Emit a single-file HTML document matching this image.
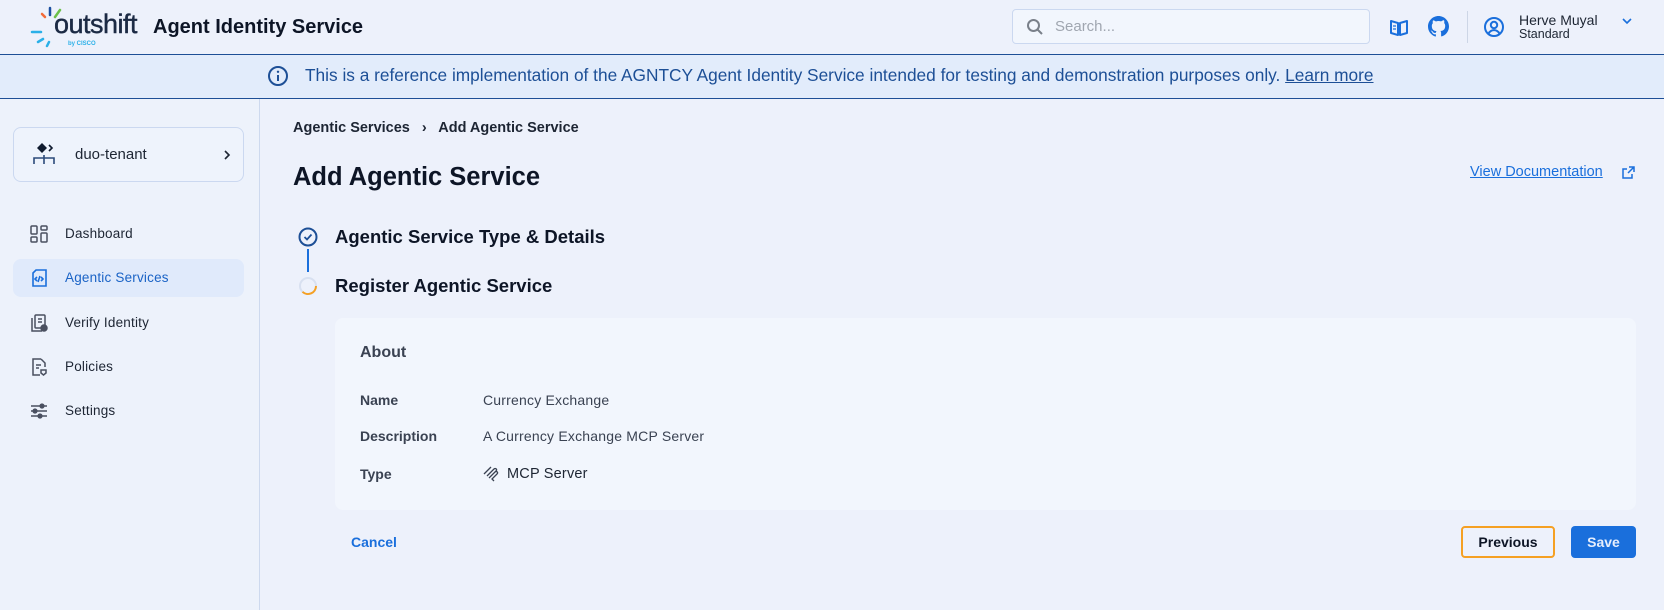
<!DOCTYPE html>
<html><head><meta charset="utf-8">
<style>
*{box-sizing:border-box;margin:0;padding:0}
body{width:1664px;height:610px;overflow:hidden;background:#edf1fb;font-family:"Liberation Sans",sans-serif;color:#0f1a2e;position:relative}
.abs{position:absolute}
.hdr{left:0;top:0;width:1664px;height:55px;background:#edf1fb;border-bottom:1.5px solid #1d4f96}
.ban{left:0;top:55px;width:1664px;height:44px;background:#e2ecfb;border-bottom:1.5px solid #1d4f96}
.side{left:0;top:99px;width:260px;height:511px;background:#edf2fb;border-right:1px solid #cdd9ee}
.nav{position:absolute;left:13px;width:231px;height:38px;border-radius:8px;font-size:13.5px;color:#1d2533;letter-spacing:.2px}
.nav svg{position:absolute;left:17px;top:10px}
.nav span{position:absolute;left:52px;top:11px}
.lbl{position:absolute;left:360px;font-size:14px;font-weight:bold;color:#3a4252}
.val{position:absolute;left:483px;font-size:14px;color:#3a4252;letter-spacing:.2px}
</style></head><body>
<div class="abs hdr">
  <svg class="abs" style="left:28px;top:4px" width="36" height="46" viewBox="0 0 36 46">
    <line x1="22" y1="11" x2="22" y2="4" stroke="#1b4fa0" stroke-width="2.5" stroke-linecap="round"/>
    <line x1="27" y1="13" x2="32" y2="6" stroke="#6cc04a" stroke-width="2.5" stroke-linecap="round"/>
    <line x1="17" y1="13" x2="14" y2="10" stroke="#f26b3a" stroke-width="2.5" stroke-linecap="round"/>
    <line x1="4" y1="28" x2="13" y2="28" stroke="#2ab0e8" stroke-width="2.5" stroke-linecap="round"/>
    <line x1="10" y1="38" x2="15" y2="35" stroke="#2ab0e8" stroke-width="2.5" stroke-linecap="round"/>
    <line x1="19" y1="42" x2="21" y2="38" stroke="#2ab0e8" stroke-width="2.5" stroke-linecap="round"/>
  </svg>
  <div class="abs" style="left:54px;top:9px;font-size:27px;color:#1c2a44;letter-spacing:-.5px;-webkit-text-stroke:.4px #1c2a44">outshift</div>
  <div class="abs" style="left:68px;top:41px;font-size:6px;color:#2ab0e8;font-weight:bold">by CISCO</div>
  <div class="abs" style="left:153px;top:16px;font-size:20px;font-weight:bold;color:#0d1526">Agent Identity Service</div>
  <div class="abs" style="left:1012px;top:9px;width:358px;height:35px;border:1.5px solid #cbd8f0;border-radius:4px;background:#f2f6fd">
    <svg class="abs" style="left:13px;top:8px" width="18" height="18" viewBox="0 0 18 18"><circle cx="7.5" cy="7.5" r="5.5" fill="none" stroke="#7a808a" stroke-width="2"/><line x1="11.5" y1="11.5" x2="16" y2="16" stroke="#7a808a" stroke-width="2"/></svg>
    <div class="abs" style="left:42px;top:8px;font-size:15px;color:#a0a6b0">Search...</div>
  </div>
  <svg class="abs" style="left:1389px;top:17px" width="20" height="20" viewBox="0 0 20 20"><path d="M2 4 L9 6 L9 18 L2 16Z M18 4 L11 6 L11 18 L18 16Z" fill="none" stroke="#1a6fdc" stroke-width="2" stroke-linejoin="round"/><path d="M4 9h3M4 12h3" stroke="#1a6fdc" stroke-width="1.3"/></svg>
  <svg class="abs" style="left:1428px;top:16px" width="21" height="21" viewBox="0 0 16 16"><path fill="#1a6fdc" d="M8 0C3.58 0 0 3.58 0 8c0 3.540 2.29 6.53 5.47 7.59.4.07.55-.17.55-.38v-1.34c-2.23.48-2.7-1.07-2.7-1.07-.36-.93-.89-1.170-.89-1.170-.73-.5.06-.49.06-.49.8.06 1.23.83 1.23.83.72 1.23 1.88.87 2.33.66.07-.52.28-.87.51-1.07-1.78-.2-3.65-.89-3.65-3.95 0-.87.31-1.59.82-2.15-.08-.2-.36-1.02.08-2.12 0 0 .67-.21 2.2.82A7.6 7.6 0 0 1 8 3.8c.68 0 1.36.09 2 .27 1.53-1.04 2.2-.82 2.2-.82.44 1.1.16 1.92.08 2.12.51.56.82 1.27.82 2.15 0 3.07-1.87 3.75-3.65 3.95.29.25.54.73.54 1.48v2.2c0 .21.15.46.55.38A8 8 0 0 0 16 8c0-4.42-3.58-8-8-8z"/></svg>
  <div class="abs" style="left:1467px;top:11px;width:1px;height:32px;background:#cdd6e6"></div>
  <svg class="abs" style="left:1483px;top:16px" width="22" height="22" viewBox="0 0 22 22"><circle cx="11" cy="11" r="9" fill="none" stroke="#1a6fdc" stroke-width="2"/><circle cx="11" cy="9" r="3.2" fill="none" stroke="#1a6fdc" stroke-width="2"/><path d="M5.5 17.5c1.5-2.5 3.5-3.4 5.5-3.4s4 .9 5.5 3.4" fill="none" stroke="#1a6fdc" stroke-width="2"/></svg>
  <div class="abs" style="left:1519px;top:12px;font-size:14px;color:#1d2533">Herve Muyal</div>
  <div class="abs" style="left:1519px;top:27px;font-size:12.5px;color:#1d2533">Standard</div>
  <svg class="abs" style="left:1621px;top:17px" width="12" height="8" viewBox="0 0 12 8"><path d="M2 2l4 4 4-4" fill="none" stroke="#1a6fdc" stroke-width="1.6"/></svg>
</div>
<div class="abs ban">
  <svg class="abs" style="left:267px;top:10px" width="22" height="22" viewBox="0 0 22 22"><circle cx="11" cy="11" r="9" fill="none" stroke="#1d4f96" stroke-width="2"/><line x1="11" y1="10" x2="11" y2="16" stroke="#1d4f96" stroke-width="2"/><circle cx="11" cy="6.8" r="1.2" fill="#1d4f96"/></svg>
  <div class="abs" style="left:305px;top:10px;font-size:17.3px;color:#1d4f96;white-space:nowrap">This is a reference implementation of the AGNTCY Agent Identity Service intended for testing and demonstration purposes only. <u>Learn more</u></div>
</div>
<div class="abs side">
  <div class="abs" style="left:13px;top:28px;width:231px;height:55px;border:1px solid #cbd8f0;border-radius:8px;background:#eef3fc">
    <svg class="abs" style="left:18px;top:14px" width="26" height="24" viewBox="0 0 26 24"><path d="M10 1l5 5-5 5-5-5z" fill="#0f1a2e"/><path d="M17 3l3 3-3 3" fill="none" stroke="#0f1a2e" stroke-width="1.6"/><path d="M2 22v-6h20v6M12 13v9" fill="none" stroke="#2b4a7a" stroke-width="1.6"/></svg>
    <div class="abs" style="left:61px;top:18px;font-size:15px;color:#1d2533">duo-tenant</div>
    <svg class="abs" style="left:209px;top:21px" width="8" height="12" viewBox="0 0 8 12"><path d="M2 2l4 4-4 4" fill="none" stroke="#1d2533" stroke-width="1.6"/></svg>
  </div>
  <div class="nav" style="top:116px"><svg width="18" height="18" viewBox="0 0 18 18" fill="none" stroke="#4a5060" stroke-width="1.5"><rect x="1" y="1" width="6" height="8" rx="1"/><rect x="11" y="1" width="6" height="4" rx="1"/><rect x="1" y="12" width="6" height="5" rx="1"/><rect x="11" y="8" width="6" height="9" rx="1"/></svg><span>Dashboard</span></div>
  <div class="nav" style="top:160px;background:#e0eafb;color:#1a63c6"><svg width="18" height="18" viewBox="0 0 18 18" fill="none" stroke="#1a6fdc" stroke-width="1.6"><path d="M6 1h10v16H3V4z"/><path d="M7 8l-2 2 2 2M11 8l2 2-2 2M10 7l-2 6"/></svg><span>Agentic Services</span></div>
  <div class="nav" style="top:205px"><svg width="18" height="18" viewBox="0 0 18 18" fill="none" stroke="#4a5060" stroke-width="1.5"><rect x="5" y="1" width="10" height="13" rx="1"/><path d="M2 4v13h10M8 5h4M8 8h4"/><circle cx="14" cy="14" r="3" fill="#4a5060"/></svg><span>Verify Identity</span></div>
  <div class="nav" style="top:249px"><svg width="18" height="18" viewBox="0 0 18 18" fill="none" stroke="#4a5060" stroke-width="1.5"><path d="M11 1H3v16h7M11 1l4 4v4M6 7h5M6 10h3"/><path d="M11 12h5v3l-2.5 2-2.5-2z"/></svg><span>Policies</span></div>
  <div class="nav" style="top:293px"><svg width="18" height="18" viewBox="0 0 18 18" fill="none" stroke="#4a5060" stroke-width="1.6"><path d="M1 4h16M1 9h16M1 14h16"/><circle cx="12" cy="4" r="1.8" fill="#4a5060"/><circle cx="5" cy="9" r="1.8" fill="#4a5060"/><circle cx="10" cy="14" r="1.8" fill="#4a5060"/></svg><span>Settings</span></div>
</div>
<div class="abs" style="left:293px;top:120px;font-size:14.5px;font-weight:bold;color:#1d2533;white-space:nowrap">Agentic Services <span style="display:inline-block;margin:0 8px">&#8250;</span> Add Agentic Service</div>
<div class="abs" style="left:293px;top:163px;font-size:25.5px;font-weight:bold;color:#0d1526">Add Agentic Service</div>
<div class="abs" style="left:1470px;top:164px;font-size:14.5px;color:#1a6fdc;text-decoration:underline">View Documentation</div>
<svg class="abs" style="left:1621px;top:165px" width="15" height="15" viewBox="0 0 15 15" fill="none" stroke="#1a6fdc" stroke-width="1.5"><path d="M8 2h5v5M13 2L7 8M11 9v4H2V4h4"/></svg>
<svg class="abs" style="left:297px;top:226px" width="22" height="72" viewBox="0 0 22 72"><circle cx="11" cy="11" r="8.5" fill="none" stroke="#1d4f96" stroke-width="2"/><path d="M7.5 11l2.5 2.5 4.5-5" fill="none" stroke="#1d4f96" stroke-width="1.8"/><line x1="11" y1="23" x2="11" y2="46" stroke="#1a6fdc" stroke-width="2"/><circle cx="11" cy="60" r="8" fill="none" stroke="#d8e0f0" stroke-width="2"/><path d="M19 60a8 8 0 0 1-13.5 5.8" fill="none" stroke="#f5a023" stroke-width="2"/></svg>
<div class="abs" style="left:335px;top:226px;font-size:18.5px;font-weight:bold;color:#0d1526">Agentic Service Type &amp; Details</div>
<div class="abs" style="left:335px;top:275px;font-size:18.5px;font-weight:bold;color:#0d1526">Register Agentic Service</div>
<div class="abs" style="left:335px;top:318px;width:1301px;height:192px;background:#f2f6fd;border-radius:8px"></div>
<div class="abs" style="left:360px;top:344px;font-size:16px;font-weight:bold;color:#3a4252">About</div>
<div class="lbl" style="top:392px">Name</div><div class="val" style="top:392px">Currency Exchange</div>
<div class="lbl" style="top:428px">Description</div><div class="val" style="top:428px">A Currency Exchange MCP Server</div>
<div class="lbl" style="top:466px">Type</div>
<svg class="abs" style="left:483px;top:466px" width="16" height="17" viewBox="0 0 16 17" fill="none" stroke="#3a4252" stroke-width="1.3"><path d="M1 8l7-7M4 10l7-7c1.5-1.5 3.5.5 2 2l-7 7M6 12l6-6c1.5-1.5 3.5.5 2 2l-5 5 2 2"/></svg>
<div class="val" style="left:507px;top:466px;font-size:14.5px;color:#1d2533">MCP Server</div>
<div class="abs" style="left:351px;top:534px;font-size:14px;font-weight:bold;color:#1a6fdc">Cancel</div>
<div class="abs" style="left:1461px;top:526px;width:94px;height:32px;border:2px solid #f5a023;border-radius:4px;font-size:14px;font-weight:bold;color:#0d1526;text-align:center;line-height:28px">Previous</div>
<div class="abs" style="left:1571px;top:526px;width:65px;height:32px;background:#1a6fdc;border-radius:4px;font-size:14px;font-weight:bold;color:#e6eefc;text-align:center;line-height:32px">Save</div>
</body></html>
